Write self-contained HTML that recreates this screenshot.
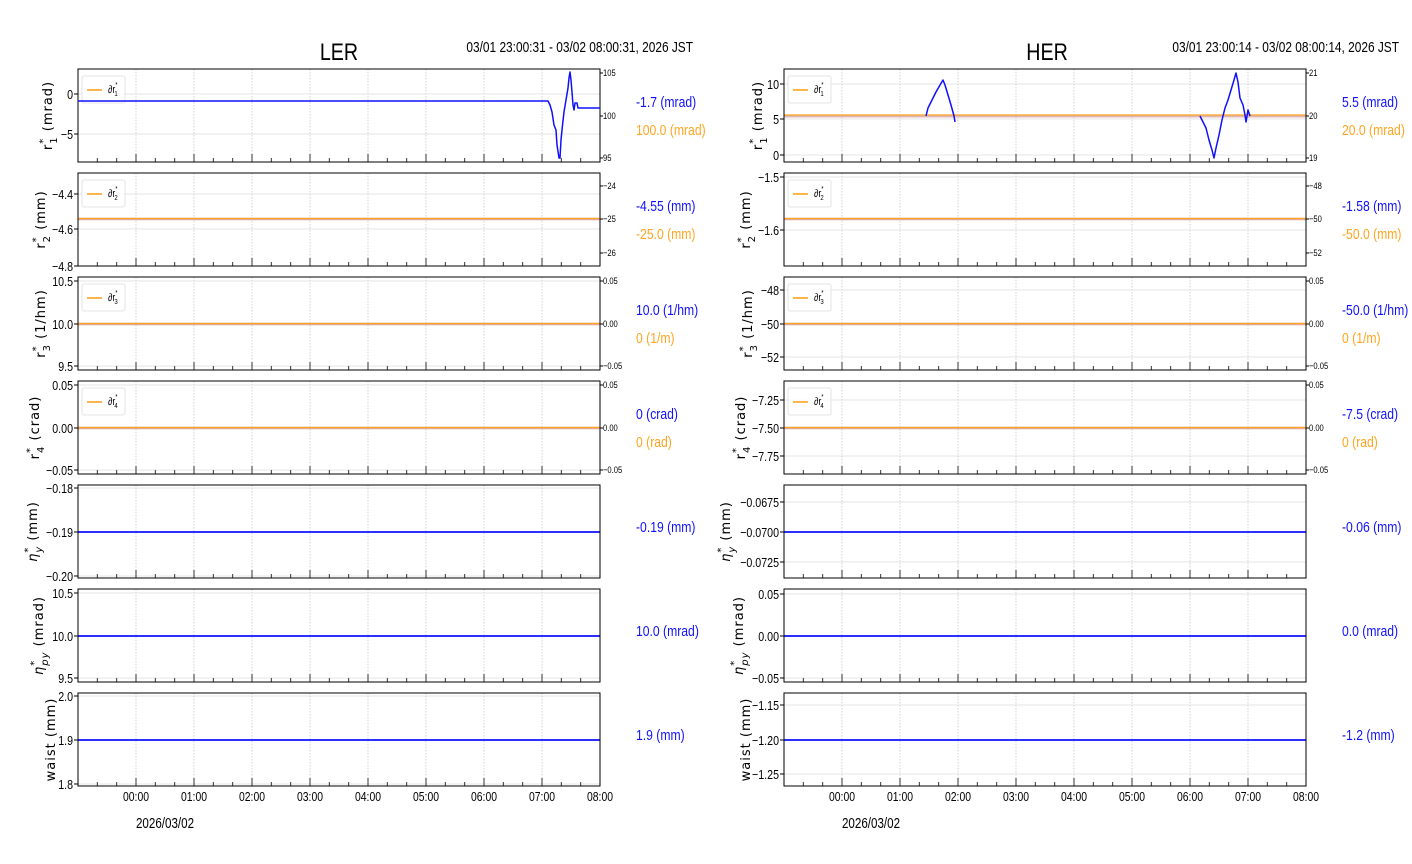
<!DOCTYPE html>
<html><head><meta charset="utf-8"><style>
html,body{margin:0;padding:0;background:#fff;width:1412px;height:864px;overflow:hidden}
svg{display:block}
text{font-family:"Liberation Sans",sans-serif}
</style></head><body>
<svg id="s" width="1412" height="864" viewBox="0 0 1412 864" xmlns="http://www.w3.org/2000/svg"></svg>
<script>
var o=[];
function T(x,y,s,size,fill,anchor,c){c=c||0.8;o.push('<text transform="translate('+x+','+y+') scale('+c+',1)" font-size="'+size+'" fill="'+(fill||'#000')+'" text-anchor="'+(anchor||'start')+'">'+s+'</text>');}
function L(x1,y1,x2,y2,st,w,extra){o.push('<line x1="'+x1+'" y1="'+y1+'" x2="'+x2+'" y2="'+y2+'" stroke="'+st+'" stroke-width="'+(w||1)+'" '+(extra||'')+'/>');}
function P(pts,st,w){o.push('<polyline fill="none" stroke="'+st+'" stroke-width="'+w+'" stroke-linejoin="round" points="'+pts.map(function(p){return p.join(',')}).join(' ')+'"/>');}
var tops=[69,173,277,381,485,589,693],H=93;
var ylabs=[
 'r<tspan font-size="10" dy="-6">*</tspan><tspan font-size="10" dx="-6" dy="11">1</tspan><tspan dy="-5"> (mrad)</tspan>',
 'r<tspan font-size="10" dy="-6">*</tspan><tspan font-size="10" dx="-6" dy="11">2</tspan><tspan dy="-5"> (mm)</tspan>',
 'r<tspan font-size="10" dy="-6">*</tspan><tspan font-size="10" dx="-6" dy="11">3</tspan><tspan dy="-5"> (1/hm)</tspan>',
 'r<tspan font-size="10" dy="-6">*</tspan><tspan font-size="10" dx="-6" dy="11">4</tspan><tspan dy="-5"> (crad)</tspan>',
 '<tspan font-style="italic">η</tspan><tspan font-size="10" dy="-6">*</tspan><tspan font-size="10" font-style="italic" dx="-6" dy="11">y</tspan><tspan dy="-5"> (mm)</tspan>',
 '<tspan font-style="italic">η</tspan><tspan font-size="10" dy="-6">*</tspan><tspan font-size="10" font-style="italic" dx="-6" dy="11">py</tspan><tspan dy="-5"> (mrad)</tspan>',
 'waist (mm)'];
var sides=[
 {x0:78,x1:600,t0:136,vx:636,title:'LER',tx:339,range:'03/01 23:00:31 - 03/02 08:00:31, 2026 JST',rx:693,
  lx:[47,40,40,34,32,38,50],
  yt:[[[94,'0'],[134,'−5']],[[194,'−4.4'],[229,'−4.6'],[266,'−4.8']],[[281,'10.5'],[324,'10.0'],[366,'9.5']],[[385,'0.05'],[428,'0.00'],[470,'−0.05']],[[488,'−0.18'],[532,'−0.19'],[576,'−0.20']],[[593,'10.5'],[636,'10.0'],[678,'9.5']],[[696,'2.0'],[740,'1.9'],[784,'1.8']]],
  rt:[[[73,'105'],[116,'100'],[158,'95']],[[186,'−24'],[219,'−25'],[253,'−26']],[[281,'0.05'],[324,'0.00'],[366,'−0.05']],[[385,'0.05'],[428,'0.00'],[470,'−0.05']]],
  vals:[['-1.7 (mrad)','100.0 (mrad)'],['-4.55 (mm)','-25.0 (mm)'],['10.0 (1/hm)','0 (1/m)'],['0 (crad)','0 (rad)'],['-0.19 (mm)'],['10.0 (mrad)'],['1.9 (mm)']],
  lines:[null,219,324,428,532,636,740]},
 {x0:784,x1:1306,t0:842,vx:1342,title:'HER',tx:1047,range:'03/01 23:00:14 - 03/02 08:00:14, 2026 JST',rx:1399,
  lx:[757,745,747,740,725,738,745],
  yt:[[[84,'10'],[119,'5'],[155,'0']],[[177,'−1.5'],[230,'−1.6']],[[290,'−48'],[324,'−50'],[357,'−52']],[[400,'−7.25'],[428,'−7.50'],[456,'−7.75']],[[502,'−0.0675'],[532,'−0.0700'],[562,'−0.0725']],[[594,'0.05'],[636,'0.00'],[678,'−0.05']],[[705,'−1.15'],[740,'−1.20'],[774,'−1.25']]],
  rt:[[[73,'21'],[116,'20'],[158,'19']],[[186,'−48'],[219,'−50'],[253,'−52']],[[281,'0.05'],[324,'0.00'],[366,'−0.05']],[[385,'0.05'],[428,'0.00'],[470,'−0.05']]],
  vals:[['5.5 (mrad)','20.0 (mrad)'],['-1.58 (mm)','-50.0 (mm)'],['-50.0 (1/hm)','0 (1/m)'],['-7.5 (crad)','0 (rad)'],['-0.06 (mm)'],['0.0 (mrad)'],['-1.2 (mm)']],
  lines:[116,219,324,428,532,636,740]}];
var BL='#1010ff',OR='#ffa520';
sides.forEach(function(S){
 T(S.tx,60,S.title,24,'#000','middle',0.82);
 T(S.rx,52,S.range,14.5,'#000','end',0.82);
 tops.forEach(function(top,i){
  var bot=top+H;
  for(var k=0;k<8;k++){var x=S.t0+58*k;L(x,top,x,bot,'#c8c8c8',0.8,'stroke-dasharray="1.5,1.5"');}
  S.yt[i].forEach(function(t){L(S.x0,t[0],S.x1,t[0],'#dcdcdc',0.8);L(S.x0-4,t[0],S.x0,t[0],'#000',1);T(S.x0-5,t[0]+5,t[1],13,'#000','end',0.82);});
  for(var m=-2;m<=24;m++){var x=S.t0+58*m/3;if(x<=S.x0+1||x>S.x1)continue;var len=(m%3==0)?8:4;L(x,bot,x,bot-len,'#333',1);}
  if(i<4){
   var y=S.lines[i];
   if(y!==null){
     if(S.title=='HER'&&i==0){L(S.x0,y,S.x1,y,'#dfb7b7',3);L(S.x0,y-1,S.x1,y-1,OR,1.3);}
     else{L(S.x0,y,S.x1,y,'#e0a8a0',2.5);L(S.x0,y-0.5,S.x1,y-0.5,OR,1.2);}
   }
  } else {L(S.x0,S.lines[i],S.x1,S.lines[i],BL,1.8);}
  o.push('<rect x="'+S.x0+'" y="'+top+'" width="'+(S.x1-S.x0)+'" height="'+H+'" fill="none" stroke="#000" stroke-width="1"/>');
  if(i<4){S.rt[i].forEach(function(t){L(S.x1,t[0],S.x1+3,t[0],'#000',1);T(S.x1+3,t[0]+3,t[1],9.5,'#000','start',0.8);});
   var lx=S.x0+4,ly=top+7;
   o.push('<rect x="'+lx+'" y="'+ly+'" width="43" height="27" rx="2" fill="#fff" fill-opacity="0.85" stroke="#ddd" stroke-width="0.8"/>');
   L(lx+5,ly+14,lx+20,ly+14,OR,1.6);
   o.push('<text transform="translate('+(lx+26)+','+(ly+17)+') scale(0.8,1)" font-size="11" fill="#000">∂r<tspan font-size="7.5" dy="-6">*</tspan><tspan font-size="7.5" dx="-4" dy="9">'+(i+1)+'</tspan></text>');
  }
  var v=S.vals[i],cy=top+32;
  if(v.length==2){T(S.vx,cy+6,v[0],14.5,BL,'start',0.84);T(S.vx,cy+34,v[1],14.5,OR,'start',0.84);}
  else{T(S.vx,top+47,v[0],14.5,BL,'start',0.84);}
  var lx2=S.lx[i]+5,cyl=top+H/2;
  o.push('<text transform="translate('+lx2+','+cyl+') rotate(-90)" font-size="13" letter-spacing="1" text-anchor="middle" fill="#000" style="font-family:\'DejaVu Sans\',sans-serif">'+ylabs[i]+'</text>');
 });
 for(var k=0;k<=8;k++){var x=S.t0+58*k;T(x,801,'0'+k+':00',13,'#000','middle',0.8);}
 T(S.t0+29,828,'2026/03/02',14.5,'#000','middle',0.8);
});
P([[78,101],[548,101],[550,105],[552,112],[554,125],[556,130],[557,145],[559,158],[560,158],[561,140],[562,130],[564,112],[566,100],[568,88],[569,78],[570,72],[571,80],[572,92],[573,105],[574,110],[575,103],[577,103],[578,108],[600,108]],BL,1.5);
P([[926,116],[928,108],[932,100],[936,92],[940,85],[943,80],[945,85],[948,95],[951,105],[954,116],[955,122]],BL,1.5);
P([[1200,116],[1203,122],[1206,128],[1209,140],[1212,150],[1214,158],[1216,148],[1219,135],[1222,120],[1225,108],[1228,100],[1231,90],[1234,80],[1236,73],[1238,82],[1240,98],[1243,105],[1245,115],[1246,122],[1248,110],[1250,116]],BL,1.5);
document.getElementById('s').innerHTML=o.join('');
</script>
</body></html>
